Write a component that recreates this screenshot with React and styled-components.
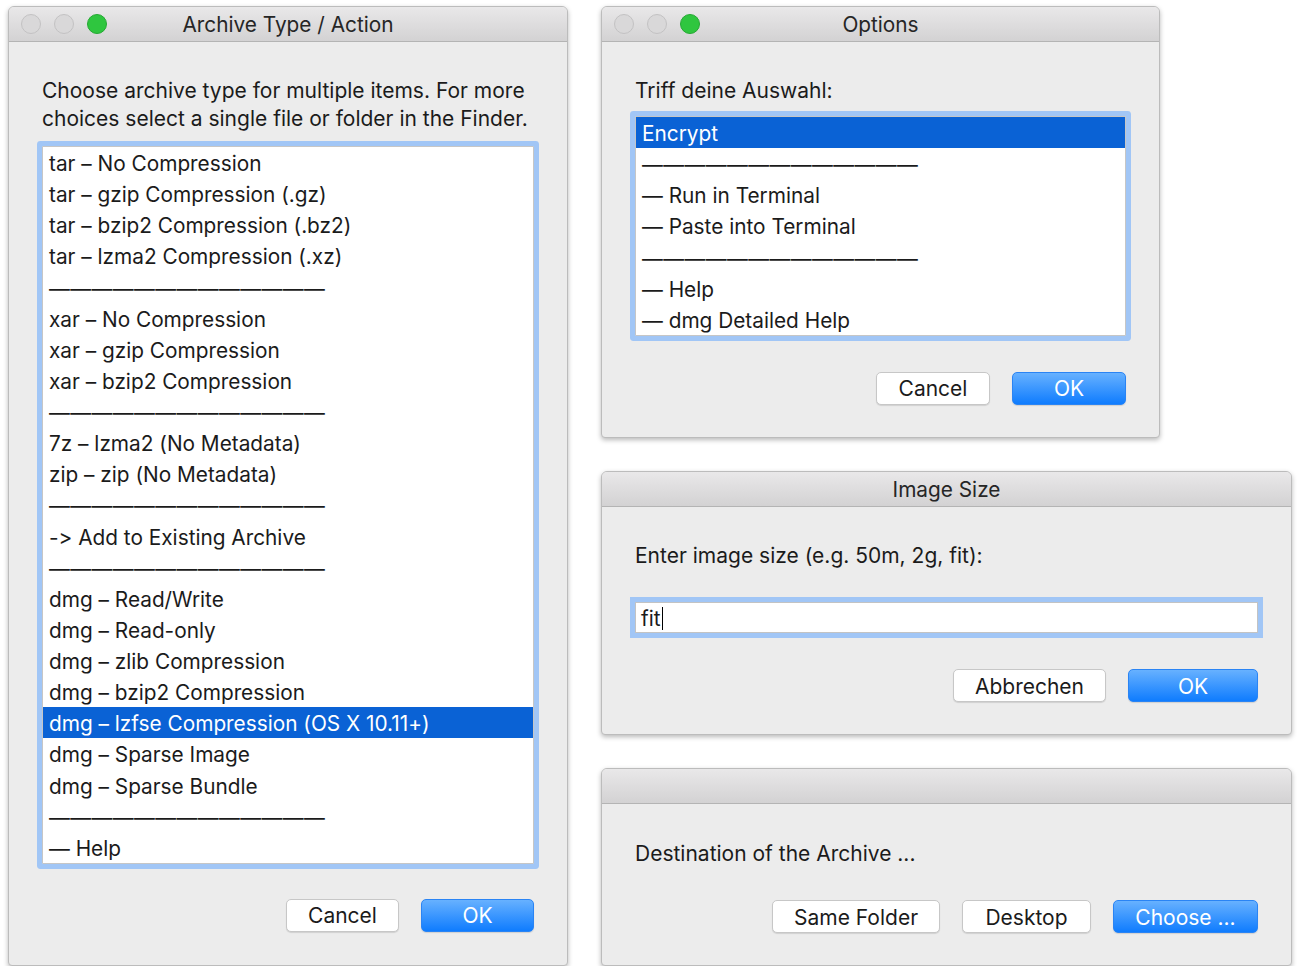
import React from 'react';
import styled, { createGlobalStyle } from 'styled-components';

const GlobalStyle = createGlobalStyle`
  html, body {
    margin: 0;
    background: #ffffff;
    font-family: Inter, "Liberation Sans", sans-serif;
    font-variant-ligatures: none;
    font-feature-settings: "calt" 0, "liga" 0;
    color: #1b1b1b;
  }
`;

const Page = styled.div`
  display: flex;
  align-items: flex-start;
  gap: 33px;
  padding: 6px 0 0 8px;
`;

const Column = styled.div`
  display: flex;
  flex-direction: column;
  align-items: flex-start;
  gap: 33px;
`;

const Window = styled.div`
  width: ${p => p.$w}px;
  height: ${p => p.$h}px;
  box-sizing: border-box;
  display: flex;
  flex-direction: column;
  background: #ececec;
  border: 1px solid #bcbcbc;
  border-radius: 6px 6px 4px 4px;
  box-shadow: 0 2px 5px rgba(0, 0, 0, 0.28);
  overflow: hidden;
`;

const TitleBar = styled.div`
  height: 35px;
  box-sizing: border-box;
  display: grid;
  grid-template-columns: 1fr auto 1fr;
  align-items: center;
  background: linear-gradient(#e9e8e9, #d3d2d3);
  border-bottom: 1px solid #b4b4b4;
  padding: 0 12px;
`;

const Lights = styled.div`
  display: flex;
  gap: 13px;
`;

const Light = styled.span`
  width: 20px;
  height: 20px;
  box-sizing: border-box;
  border-radius: 50%;
  background: ${p => (p.$on ? '#2fc63f' : '#d9d8d9')};
  border: 1px solid ${p => (p.$on ? '#25a933' : '#c3c2c3')};
`;

const Title = styled.div`
  font-size: 20.8px;
  color: #262626;
  white-space: nowrap;
  padding-top: 1px;
`;

const Body = styled.div`
  display: flex;
  flex-direction: column;
  padding: ${p => p.$top || 34}px 33px 0 33px;
`;

const Label = styled.div`
  font-size: 21px;
  line-height: 28px;
  white-space: nowrap;
  padding-top: 1px;
  height: ${p => (p.$lines || 1) * 28}px;
  box-sizing: border-box;
`;

const ListBox = styled.div`
  margin-top: ${p => p.$gap}px;
  background: #ffffff;
  border: 1px solid #c6c6c6;
  box-shadow: 0 0 0 5px #a1c6f6;
  border-radius: 1px;
`;

const Row = styled.div`
  height: 31.14px;
  box-sizing: border-box;
  display: flex;
  align-items: center;
  padding: 2px 0 0 6px;
  font-size: 20.8px;
  white-space: nowrap;
  letter-spacing: ${p => (p.$sep ? '0.45px' : 'normal')};
  color: ${p => (p.$sel ? '#ffffff' : '#1b1b1b')};
  background: ${p => (p.$sel ? '#0a62d5' : 'transparent')};
`;

const Field = styled.div`
  margin-top: 33px;
  height: 31px;
  box-sizing: border-box;
  display: flex;
  align-items: center;
  padding: 2px 0 0 5px;
  background: #ffffff;
  border: 1px solid #c3c3c3;
  box-shadow: 0 0 0 5px #a1c6f6;
  font-size: 20.8px;
`;

const Caret = styled.span`
  display: inline-block;
  width: 1px;
  height: 23px;
  background: #000;
  margin-left: 1px;
`;

const Buttons = styled.div`
  display: flex;
  justify-content: flex-end;
  gap: 22px;
  margin-top: ${p => p.$gap}px;
`;

const Button = styled.div`
  width: ${p => p.$w}px;
  height: 33px;
  box-sizing: border-box;
  display: flex;
  align-items: center;
  justify-content: center;
  padding-top: 1px;
  border-radius: 5px;
  font-size: 21px;
  border: 1px solid ${p => (p.$primary ? '#2a84f4' : '#c7c7c7')};
  color: ${p => (p.$primary ? '#ffffff' : '#1b1b1b')};
  background: ${p => (p.$primary ? 'linear-gradient(#67b1ff, #0f7cfe)' : '#ffffff')};
  box-shadow: 0 1px 1px rgba(0, 0, 0, 0.12);
`;

const SEP = '—————————————';

const archiveItems = [
  'tar – No Compression',
  'tar – gzip Compression (.gz)',
  'tar – bzip2 Compression (.bz2)',
  'tar – lzma2 Compression (.xz)',
  SEP,
  'xar – No Compression',
  'xar – gzip Compression',
  'xar – bzip2 Compression',
  SEP,
  '7z – lzma2 (No Metadata)',
  'zip – zip (No Metadata)',
  SEP,
  '-> Add to Existing Archive',
  SEP,
  'dmg – Read/Write',
  'dmg – Read-only',
  'dmg – zlib Compression',
  'dmg – bzip2 Compression',
  'dmg – lzfse Compression (OS X 10.11+)',
  'dmg – Sparse Image',
  'dmg – Sparse Bundle',
  SEP,
  '— Help',
];

const optionItems = [
  'Encrypt',
  SEP,
  '— Run in Terminal',
  '— Paste into Terminal',
  SEP,
  '— Help',
  '— dmg Detailed Help',
];

const Bar = ({ title, lights }) => (
  <TitleBar>
    <Lights>
      {lights && (
        <>
          <Light />
          <Light />
          <Light $on />
        </>
      )}
    </Lights>
    <Title>{title}</Title>
    <div />
  </TitleBar>
);

export default function App() {
  return (
    <>
      <GlobalStyle />
      <Page>
        <Window $w={560} $h={960}>
          <Bar title="Archive Type / Action" lights />
          <Body>
            <Label $lines={2}>
              Choose archive type for multiple items. For more<br />
              choices select a single file or folder in the Finder.
            </Label>
            <ListBox $gap={14}>
              {archiveItems.map((item, i) => (
                <Row key={'a' + i} $sel={i === 18} $sep={item === SEP}>{item}</Row>
              ))}
            </ListBox>
            <Buttons $gap={35}>
              <Button $w={113}>Cancel</Button>
              <Button $w={113} $primary>OK</Button>
            </Buttons>
          </Body>
        </Window>

        <Column>
          <Window $w={559} $h={432}>
            <Bar title="Options" lights />
            <Body>
              <Label>Triff deine Auswahl:</Label>
              <ListBox $gap={12}>
                {optionItems.map((item, i) => (
                  <Row key={'o' + i} $sel={i === 0} $sep={item === SEP}>{item}</Row>
                ))}
              </ListBox>
              <Buttons $gap={36}>
                <Button $w={114}>Cancel</Button>
                <Button $w={114} $primary>OK</Button>
              </Buttons>
            </Body>
          </Window>

          <Window $w={691} $h={264}>
            <Bar title="Image Size" />
            <Body>
              <Label>Enter image size (e.g. 50m, 2g, fit):</Label>
              <Field>
                fit<Caret />
              </Field>
              <Buttons $gap={36}>
                <Button $w={153}>Abbrechen</Button>
                <Button $w={130} $primary>OK</Button>
              </Buttons>
            </Body>
          </Window>

          <Window $w={691} $h={198}>
            <Bar title="" />
            <Body $top={35}>
              <Label>Destination of the Archive ...</Label>
              <Buttons $gap={33}>
                <Button $w={168}>Same Folder</Button>
                <Button $w={129}>Desktop</Button>
                <Button $w={145} $primary>Choose ...</Button>
              </Buttons>
            </Body>
          </Window>
        </Column>
      </Page>
    </>
  );
}
